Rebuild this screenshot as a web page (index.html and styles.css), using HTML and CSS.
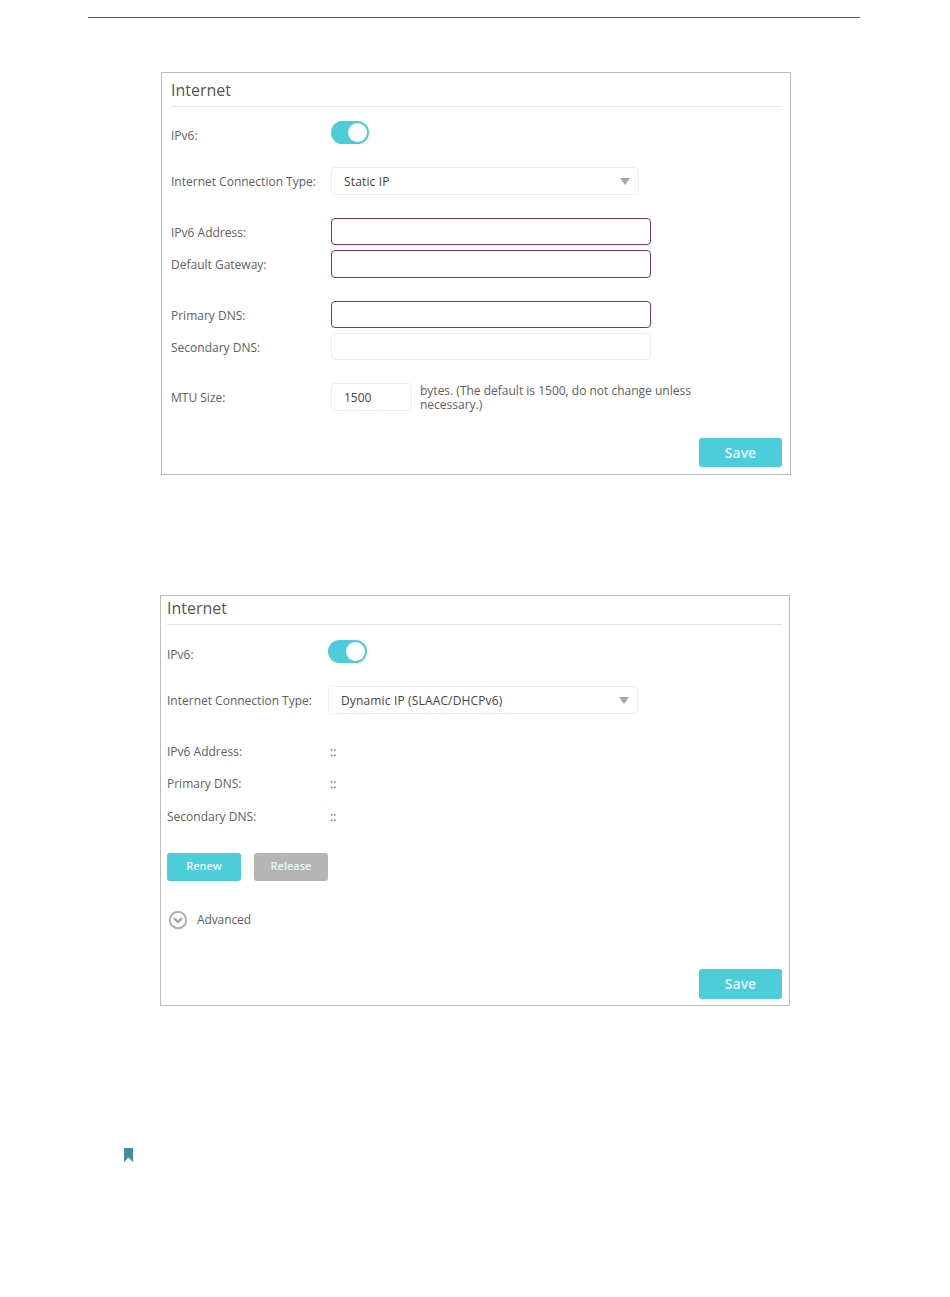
FILE: index.html
```html
<!DOCTYPE html>
<html lang="en">
<head>
  <meta charset="UTF-8">
  <meta name="viewport" content="width=device-width, initial-scale=1.0">
  <title>Internet</title>
  <link rel="stylesheet" href="styles.css">
</head>
<body>

<div class="rule"></div>

<section class="panel panel-static">
  <h2 class="panel-title">Internet</h2>

  <div class="row row-toggle">
    <span class="label">IPv6:</span>
    <span class="toggle"><span class="knob"></span></span>
  </div>

  <div class="row row-select">
    <span class="label">Internet Connection Type:</span>
    <div class="select select-short">Static IP<span class="arrow"></span></div>
  </div>

  <div class="row row-group">
    <label class="label label-low" for="addr">IPv6 Address:</label>
    <input class="field invalid" id="addr" type="text">
  </div>
  <div class="row row-next">
    <label class="label" for="gateway">Default Gateway:</label>
    <input class="field field-tall invalid" id="gateway" type="text">
  </div>
  <div class="row row-group">
    <label class="label label-low" for="dns1">Primary DNS:</label>
    <input class="field invalid" id="dns1" type="text">
  </div>
  <div class="row row-next">
    <label class="label label-low" for="dns2">Secondary DNS:</label>
    <input class="field" id="dns2" type="text">
  </div>

  <div class="row row-group">
    <label class="label" for="mtu">MTU Size:</label>
    <input class="field field-mtu" id="mtu" type="text" value="1500">
    <span class="hint">bytes. (The default is 1500, do not change unless necessary.)</span>
  </div>

  <div class="actions">
    <button class="btn btn-save" type="button">Save</button>
  </div>
</section>

<section class="panel panel-dynamic">
  <h2 class="panel-title">Internet</h2>

  <div class="row row-toggle">
    <span class="label">IPv6:</span>
    <span class="toggle"><span class="knob"></span></span>
  </div>

  <div class="row row-select">
    <span class="label">Internet Connection Type:</span>
    <div class="select select-long">Dynamic IP (SLAAC/DHCPv6)<span class="arrow"></span></div>
  </div>

  <div class="info-list">
    <div class="row row-info"><span class="label">IPv6 Address:</span><span class="value">::</span></div>
    <div class="row row-info"><span class="label">Primary DNS:</span><span class="value">::</span></div>
    <div class="row row-info"><span class="label">Secondary DNS:</span><span class="value">::</span></div>
  </div>

  <div class="btn-row">
    <button class="btn btn-small" type="button">Renew</button>
    <button class="btn btn-small btn-grey" type="button">Release</button>
  </div>

  <div class="advanced">
    <svg class="advanced-icon" width="20" height="20" viewBox="0 0 20 20">
      <circle cx="10" cy="10" r="8.2" fill="none" stroke="#b0b0b0" stroke-width="2"/>
      <path d="M6 8.2 L10 12 L14 8.2" fill="none" stroke="#a8a8a8" stroke-width="2.6"/>
    </svg>
    <span>Advanced</span>
  </div>

  <div class="actions">
    <button class="btn btn-save" type="button">Save</button>
  </div>
</section>

<svg class="bookmark" width="9" height="14" viewBox="0 0 9 14">
  <path d="M0 0 H9 V14 L4.5 9.5 L0 14 Z" fill="#3f8ea6"/>
</svg>

</body>
</html>
```

FILE: styles.css
```css
body {
  margin: 0;
  background-color: #fff;
  color: #606060;
  font-family: "Open Sans", sans-serif;
  font-size: 12px;
}

.rule {
  height: 1px;
  margin: 17px 90px 0 88px;
  background-color: #555;
}

.panel {
  box-sizing: border-box;
  width: 630px;
  border: 1px solid #bbb;
}

.panel-static {
  height: 403px;
  margin: 54px 0 0 161px;
  padding: 0 8px 0 9px;
}

.panel-dynamic {
  height: 411px;
  margin: 120px 0 0 160px;
  padding: 0 7px 0 6px;
}

.panel-title {
  height: 33px;
  margin: 0;
  border-bottom: 1px solid #e4e4e4;
  color: #555;
  font-size: 16px;
  font-weight: normal;
  line-height: 35px;
}

.panel-dynamic .panel-title {
  height: 28px;
  line-height: 24px;
}

.row {
  display: flex;
  align-items: center;
}

.label {
  flex: none;
  width: 160px;
}

.label-low {
  padding-top: 2px;
}

.panel-dynamic .label {
  width: 161px;
}

.row-toggle {
  margin-top: 14px;
}

.row-toggle .label {
  padding-top: 6px;
}

.panel-dynamic .row-toggle {
  margin-top: 15px;
}

.row-select,
.row-group {
  margin-top: 23px;
}

.row-next {
  margin-top: 5px;
}

.toggle {
  display: flex;
  justify-content: flex-end;
  align-items: center;
  box-sizing: border-box;
  width: 38px;
  height: 23px;
  padding-right: 2px;
  border-radius: 12px;
  background-color: #4dccda;
}

.panel-dynamic .toggle {
  width: 39px;
}

.knob {
  width: 19px;
  height: 19px;
  border-radius: 50%;
  background-color: #fff;
}

.select {
  display: flex;
  justify-content: space-between;
  align-items: center;
  box-sizing: border-box;
  height: 28px;
  padding: 0 8px 0 12px;
  border: 1px solid #eee;
  border-radius: 4px;
  color: #444;
  letter-spacing: 0.15px;
}

.select-short {
  width: 308px;
}

.select-long {
  width: 310px;
}

.arrow {
  width: 0;
  height: 0;
  border-top: 7px solid #a5a5a5;
  border-left: 5px solid transparent;
  border-right: 5px solid transparent;
}

.field {
  box-sizing: border-box;
  width: 320px;
  height: 27px;
  padding: 0 12px;
  border: 1px solid #eee;
  border-radius: 4px;
  outline: none;
  color: #444;
  font: inherit;
}

.field-tall {
  height: 28px;
}

.field.invalid {
  border-color: #80365f;
}

.field-mtu {
  flex: none;
  width: 81px;
  height: 28px;
}

.hint {
  width: 290px;
  margin: 0 0 -1px 8px;
  padding-top: 1px;
  line-height: 14px;
}

.info-list {
  margin-top: 21px;
}

.row-info {
  height: 32.5px;
}

.value {
  padding-left: 2px;
}

.btn {
  border: none;
  border-radius: 3px;
  background-color: #4dccda;
  color: #e4f7f9;
  cursor: pointer;
  font-family: inherit;
  font-weight: 600;
}

.btn-small {
  width: 74px;
  height: 28px;
  padding-bottom: 3px;
  font-size: 11px;
}

.btn-grey {
  background-color: #b5b5b5;
}

.btn-save {
  width: 83px;
  height: 29px;
  padding-bottom: 2px;
  font-size: 14px;
}

.panel-dynamic .btn-save {
  height: 30px;
}

.btn-row {
  display: flex;
  gap: 13px;
  margin-top: 20px;
}

.advanced {
  display: flex;
  align-items: center;
  gap: 9px;
  margin: 29px 0 0 1px;
  letter-spacing: -0.1px;
}

.actions {
  display: flex;
  justify-content: flex-end;
  margin-top: 27px;
}

.panel-dynamic .actions {
  margin-top: 39px;
}

.bookmark {
  display: block;
  margin: 142px 0 0 124px;
}
```
